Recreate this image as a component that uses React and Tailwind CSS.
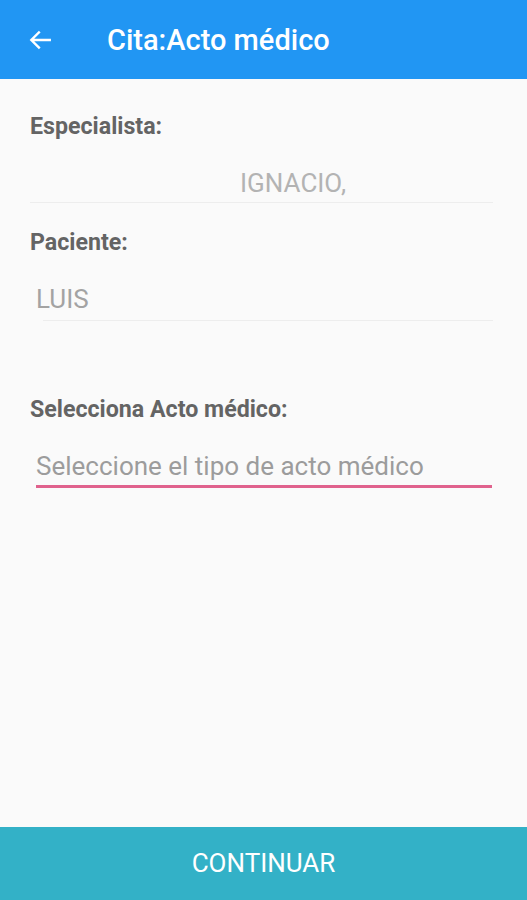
import React from 'react';

export default function App() {
  return (
    <div className="w-[527px] h-[900px] flex flex-col bg-[#fafafa] font-['Roboto',sans-serif] overflow-hidden">
      <header className="h-[79px] shrink-0 bg-[#2196f3] flex items-center text-white">
        <svg className="ml-[27px] w-[26px] h-[26px]" viewBox="0 0 24 24" fill="none" stroke="white" strokeWidth="2.2" strokeLinecap="square">
          <path d="M21 12H4.5M11 5l-7 7 7 7" />
        </svg>
        <h1 className="ml-[54px] text-[29px] font-medium leading-[34px]">Cita:Acto médico</h1>
      </header>

      <main className="flex-1 px-[30px] pt-[33px]">
        <div className="text-[23.2px] font-bold text-[#646464] leading-[28px]">Especialista:</div>
        <div className="mt-[28px] pl-[210px] pb-[4px] mr-[4px] text-[26px] text-[#b3b3b3] leading-[30px] border-b border-[#ededed]">IGNACIO,</div>

        <div className="mt-[25px] text-[23.2px] font-bold text-[#646464] leading-[28px]">Paciente:</div>
        <div className="mt-[28px] ml-[13px] mr-[4px] pb-[5px] border-b border-[#ededed]">
          <span className="-ml-[7px] text-[26px] text-[#a3a3a3] leading-[30px]">LUIS</span>
        </div>

        <div className="mt-[74px] text-[23.2px] font-bold text-[#646464] leading-[28px]">Selecciona Acto médico:</div>
        <div className="mt-[28px] ml-[6px] mr-[5px] pb-[4px] border-b-[3px] border-[#e0628d] text-[26px] text-[#9c9c9c] leading-[30px]">
          Seleccione el tipo de acto médico
        </div>
      </main>

      <button className="h-[73px] shrink-0 bg-[#33b1c7] text-white text-[26px] flex items-center justify-center">
        CONTINUAR
      </button>
    </div>
  );
}
